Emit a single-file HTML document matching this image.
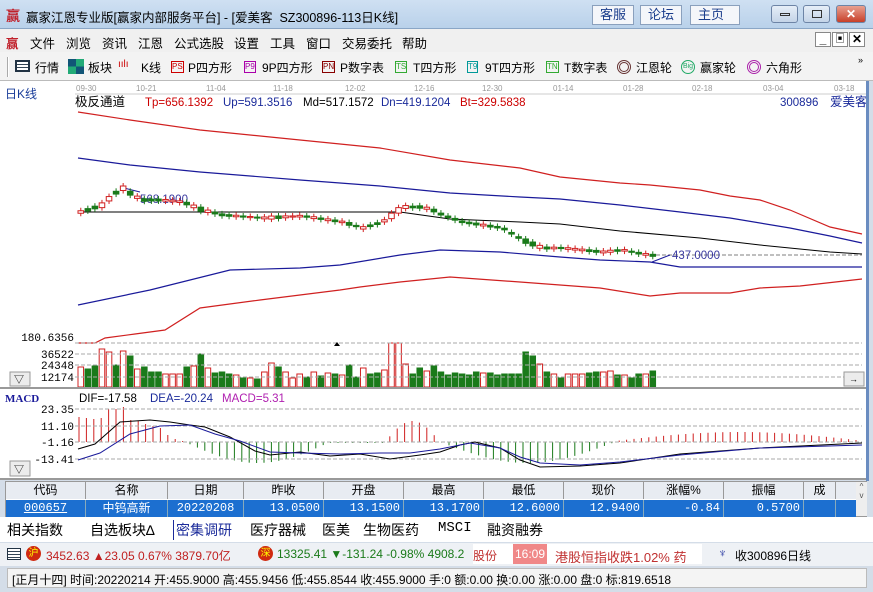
<!DOCTYPE html>
<html><head><meta charset="utf-8"><style>
*{margin:0;padding:0;box-sizing:border-box}
body{width:873px;height:592px;overflow:hidden;background:#d4dde8;font-family:"Liberation Sans","Noto Sans CJK SC",sans-serif;font-size:12px;position:relative}
.abs{position:absolute}
#title{left:0;top:0;width:873px;height:29px;background:linear-gradient(#cfe0f2,#b9d1ea);border-bottom:1px solid #8aa6c6}
#menu{left:0;top:29px;width:873px;height:23px;background:#f0f0f0}
#tool{left:0;top:52px;width:873px;height:29px;background:#f3f3f3;border-bottom:1px solid #bbb}
.mi{position:absolute;top:4px;font-size:12.5px}
.btn{position:absolute;top:5px;height:20px;background:#f4f6fa;border:1px solid #8aa0bd;color:#1a3d8c;font-size:13px;padding:0 7px;line-height:18px}
.wb{position:absolute;top:5px;height:18px;width:27px;border:1px solid #6d84a6;border-radius:3px;background:linear-gradient(#e6eef8,#c4d4e8)}
#chart{left:0;top:81px;width:866px;height:399px;background:#fff}
.tb{position:absolute;top:7px;font-size:12px}
</style></head><body>
<div id="title" class="abs">
<div class="abs" style="left:6px;top:6px;color:#c0202a;font-weight:bold;font-size:14px">赢</div>
<div class="abs" style="left:26px;top:7px;font-size:12.5px">赢家江恩专业版[赢家内部服务平台] - [爱美客&nbsp; SZ300896-113日K线]</div>
<div class="btn" style="left:592px">客服</div><div class="btn" style="left:640px">论坛</div><div class="btn" style="left:690px;width:50px">主页</div>
<div class="wb" style="left:771px"><div class="abs" style="left:8px;top:7px;width:10px;height:3px;border:1px solid #333"></div></div>
<div class="wb" style="left:803px"><div class="abs" style="left:8px;top:4px;width:10px;height:8px;border:1px solid #333"></div></div>
<div class="wb" style="left:836px;width:30px;background:linear-gradient(#e8a090,#c8402a);color:#fff;text-align:center;font-weight:bold;line-height:16px">✕</div>
</div>
<div id="menu" class="abs">
<div class="mi" style="left:6px;color:#c0202a;font-weight:bold">赢</div>
<div class="mi" style="left:30px">文件</div><div class="mi" style="left:66px">浏览</div><div class="mi" style="left:102px">资讯</div><div class="mi" style="left:138px">江恩</div><div class="mi" style="left:174px">公式选股</div><div class="mi" style="left:234px">设置</div><div class="mi" style="left:270px">工具</div><div class="mi" style="left:306px">窗口</div><div class="mi" style="left:342px">交易委托</div><div class="mi" style="left:402px">帮助</div>
<div class="abs" style="left:815px;top:3px;width:16px;height:15px;border:1px solid #888;background:#fff;font-weight:bold;text-align:center;line-height:12px">_</div>
<div class="abs" style="left:832px;top:3px;width:16px;height:15px;border:1px solid #888;background:#fff;font-size:10px;text-align:center;line-height:13px">▣</div>
<div class="abs" style="left:849px;top:3px;width:16px;height:15px;border:1px solid #888;background:#fff;font-weight:bold;text-align:center;line-height:13px">✕</div>
</div>
<div id="tool" class="abs">
<div class="abs" style="left:7px;top:5px;width:2px;height:20px;border-left:1px solid #aaa;border-right:1px solid #fff"></div>
<div class="abs" style="left:15px;top:8px;width:15px;height:12px;border:2px solid #234;background:repeating-linear-gradient(#fff 0 2px,#345 2px 3px)"></div>
<div class="tb" style="left:35px">行情</div>
<div class="abs" style="left:68px;top:7px;width:16px;height:15px;background:conic-gradient(#2a7 0 25%,#157 0 50%,#2a7 0 75%,#157 0)"></div>
<div class="tb" style="left:88px">板块</div>
<div class="tb" style="left:118px;color:#c00;font-size:10px">ıılı</div><div class="tb" style="left:141px">K线</div>
<div class="tb" style="left:171px;color:#c00;font-size:8px;border:1px solid #c00;top:9px;line-height:10px">PS</div><div class="tb" style="left:188px">P四方形</div>
<div class="tb" style="left:244px;color:#a0a;font-size:8px;border:1px solid #a0a;top:9px;line-height:10px">P9</div><div class="tb" style="left:262px">9P四方形</div>
<div class="tb" style="left:322px;color:#800;font-size:8px;border:1px solid #800;top:9px;line-height:10px">PN</div><div class="tb" style="left:340px">P数字表</div>
<div class="tb" style="left:395px;color:#3a3;font-size:8px;border:1px solid #3a3;top:9px;line-height:10px">TS</div><div class="tb" style="left:413px">T四方形</div>
<div class="tb" style="left:467px;color:#099;font-size:8px;border:1px solid #099;top:9px;line-height:10px">T9</div><div class="tb" style="left:485px">9T四方形</div>
<div class="tb" style="left:546px;color:#3a3;font-size:8px;border:1px solid #3a3;top:9px;line-height:10px">TN</div><div class="tb" style="left:564px">T数字表</div>
<div class="abs" style="left:617px;top:8px;width:14px;height:14px;border-radius:50%;border:3px double #633"></div><div class="tb" style="left:636px">江恩轮</div>
<div class="abs" style="left:681px;top:8px;width:14px;height:14px;border-radius:50%;border:1px solid #2a6;font-size:7px;color:#2a6;text-align:center;line-height:12px">Big</div><div class="tb" style="left:700px">赢家轮</div>
<div class="abs" style="left:747px;top:8px;width:14px;height:14px;border-radius:50%;border:3px double #a2a"></div><div class="tb" style="left:766px">六角形</div>
<div class="tb" style="left:858px;top:3px;font-size:9px">»</div>
</div>
<div id="chart" class="abs">
<svg width="866" height="399" style="position:absolute;left:0;top:0" font-family="Liberation Sans,Noto Sans CJK SC,sans-serif">
<g fill="#999" font-size="8"><text x="76" y="10">09-30</text><text x="136" y="10">10-21</text><text x="206" y="10">11-04</text><text x="273" y="10">11-18</text><text x="345" y="10">12-02</text><text x="414" y="10">12-16</text><text x="482" y="10">12-30</text><text x="553" y="10">01-14</text><text x="623" y="10">01-28</text><text x="692" y="10">02-18</text><text x="763" y="10">03-04</text><text x="834" y="10">03-18</text></g>
<line x1="75" y1="13" x2="866" y2="13" stroke="#ccc"/>
<text x="5" y="17" fill="#1a3d9a" font-size="12">日K线</text>
<g font-size="11.5"><text x="75" y="25" fill="#000" font-size="12.5">极反通道</text><text x="145" y="25" fill="#c00">Tp=656.1392</text><text x="223" y="25" fill="#1a2a9a">Up=591.3516</text><text x="303" y="25" fill="#000">Md=517.1572</text><text x="381" y="25" fill="#1a2a9a">Dn=419.1204</text><text x="460" y="25" fill="#c00">Bt=329.5838</text><text x="780" y="25" fill="#1a2a9a">300896</text><text x="830" y="25" fill="#1a2a9a" font-size="12.5">爱美客</text></g>
<g fill="none" stroke-width="1.2" transform="translate(0,-81)">
<polyline stroke="#d02020" points="78,112 130,120 200,130 300,140 380,148 450,160 520,168 560,177 620,183 650,185 700,190 730,196 760,200 790,210 830,227 862,234"/>
<polyline stroke="#1a1a9a" points="78,158 130,165 200,172 300,180 380,186 450,193 520,197 560,199 620,205 680,212 730,218 790,228 830,236 862,243"/>
<polyline stroke="#000" stroke-width="1" points="78,212 400,212 450,219 520,222 560,224 620,231 700,238 760,245 830,252 862,254"/>
<polyline stroke="#1a1a9a" points="78,305 150,290 230,270 300,268 340,265 400,255 440,250 500,252 560,257 600,260 650,262 680,267 730,267 862,267"/>
<polyline stroke="#d02020" points="78,343 95,343 105,338 135,334 165,330 200,308 260,300 300,295 340,290 360,287 400,282 450,277 520,282 560,285 600,288 650,296 680,293 730,293 760,288 800,286 862,279"/>
<polyline stroke="#1a1a9a" stroke-width="1" points="120,187 140,192"/>
<line x1="650" y1="255" x2="862" y2="255" stroke="#999" stroke-dasharray="4,2"/>
<polyline stroke="#1a1a9a" stroke-width="1" points="652,262 670,255"/>
</g>
<g transform="translate(0,-81)"><text x="140" y="203" fill="#3a3aa0" font-size="11.5">568.1900</text><text x="672" y="259" fill="#3a3aa0" font-size="11.5">437.0000</text>
<g id="cdl"></g><g id="vol"></g><g id="mac"></g>
<g stroke="#aaa" stroke-dasharray="4,2"><line x1="75" y1="343" x2="862" y2="343"/><line x1="75" y1="354" x2="862" y2="354"/><line x1="75" y1="365" x2="862" y2="365"/><line x1="75" y1="377" x2="862" y2="377"/>
<line x1="75" y1="409" x2="862" y2="409"/><line x1="75" y1="426" x2="862" y2="426"/><line x1="75" y1="442" x2="862" y2="442"/><line x1="75" y1="459" x2="862" y2="459"/></g>
<line x1="0" y1="388" x2="866" y2="388" stroke="#999" stroke-width="2"/>
<line x1="0" y1="479" x2="866" y2="479" stroke="#999" stroke-width="2"/>
<path d="M334 346 l3 -4 l3 4z" fill="#000"/>
<g font-size="11" fill="#000" text-anchor="end" font-family="Liberation Mono,monospace"><text x="74" y="341">180.6356</text><text x="74" y="358">36522</text><text x="74" y="369">24348</text><text x="74" y="381">12174</text>
<text x="74" y="413">23.35</text><text x="74" y="430">11.10</text><text x="74" y="446">-1.16</text><text x="74" y="463">-13.41</text></g>
<text x="5" y="402" fill="#1a1a9a" font-size="11" font-family="Liberation Serif,serif" font-weight="bold">MACD</text>
<g font-size="11.5"><text x="79" y="402">DIF=-17.58</text><text x="150" y="402" fill="#1a2a9a">DEA=-20.24</text><text x="222" y="402" fill="#b020b0">MACD=5.31</text></g>
<polyline id="dif" fill="none" stroke="#000" points="78,449 95,444 120,422 150,420 170,422 190,425 205,427 230,437 255,451 270,455 300,452 330,456 360,454 390,459 420,455 440,452 460,445 475,442 500,448 520,460 540,467 580,466 620,463 680,454 760,448 862,443"/>
<polyline id="dea" fill="none" stroke="#1a1a9a" points="78,460 100,453 130,434 160,426 190,425 215,434 240,441 270,452 300,453 340,454 380,453 410,453 440,449 470,443 500,448 520,457 540,463 580,465 620,462 680,455 760,448 862,445"/>
<rect x="10" y="372" width="20" height="14" fill="#ececec" stroke="#999"/><text x="14" y="383" font-size="10">▽</text>
<rect x="10" y="461" width="20" height="15" fill="#ececec" stroke="#999"/><text x="14" y="473" font-size="10">▽</text>
<rect x="844" y="372" width="20" height="14" fill="#ececec" stroke="#999"/><text x="849" y="382" font-size="9">→</text>
</g>
</svg>
</div>
<div class="abs" style="left:866px;top:81px;width:3px;height:400px;background:#6a8cc0"></div>
<div class="abs" style="left:5px;top:481px;width:862px;height:36px;background:#fff;border:1px solid #999">
<div id="th" class="abs" style="left:0;top:0;width:850px;height:17px;background:#e8ecf2"></div>
<div id="tr" class="abs" style="left:0;top:18px;width:850px;height:17px;background:#1c6fd0;color:#fff"></div>
<div class="abs" style="left:850px;top:0;width:11px;height:34px;background:#eee;font-size:8px;text-align:center;color:#555">^<br>v</div>
</div>
<div class="abs" style="left:0;top:517px;width:873px;height:25px;background:#fff;font-size:14px">
<span class="abs" style="left:7px;top:3px">相关指数</span><span class="abs" style="left:90px;top:3px">自选板块∆</span><span class="abs" style="left:173px;top:3px;color:#1a2a9a;border-left:1px solid #1a2a9a;padding-left:2px">密集调研</span><span class="abs" style="left:250px;top:3px">医疗器械</span><span class="abs" style="left:322px;top:3px">医美</span><span class="abs" style="left:363px;top:3px">生物医药</span><span class="abs" style="left:438px;top:3px;font-family:'Liberation Mono',monospace">MSCI</span><span class="abs" style="left:487px;top:3px">融资融券</span>
</div>
<div class="abs" style="left:0;top:543px;width:873px;height:23px;background:#eef1f5;font-size:12px">
<div class="abs" style="left:7px;top:5px;width:14px;height:12px;border:1px solid #234;background:repeating-linear-gradient(#fff 0 2px,#345 2px 3px)"></div>
<div class="abs" style="left:26px;top:3px;width:15px;height:15px;border-radius:50%;background:#d02a10;color:#ff0;font-size:10px;text-align:center;line-height:15px">沪</div>
<span class="abs" style="left:46px;top:4px;color:#c02020">3452.63 ▲23.05 0.67% 3879.70亿</span>
<div class="abs" style="left:258px;top:3px;width:15px;height:15px;border-radius:50%;background:#d02a10;color:#ff0;font-size:10px;text-align:center;line-height:15px">深</div>
<span class="abs" style="left:277px;top:4px;color:#1a7a1a">13325.41 ▼-131.24 -0.98% 4908.2</span>
<div class="abs" style="left:473px;top:1px;width:40px;height:20px;background:#fff;color:#c03030;padding:3px 0 0 0">股份</div>
<div class="abs" style="left:513px;top:1px;width:34px;height:20px;background:#f08888;color:#fff;padding:3px 2px">16:09</div>
<div class="abs" style="left:547px;top:1px;width:155px;height:20px;background:#fff;color:#c03030;padding:3px 8px;font-size:13px;overflow:hidden;white-space:nowrap">港股恒指收跌1.02% 药</div>
<span class="abs" style="left:718px;top:3px;color:#1a2a9a">♆</span>
<span class="abs" style="left:735px;top:4px">收300896日线</span>
</div>
<div class="abs" style="left:7px;top:568px;width:860px;height:20px;background:#f4f4f4;border:1px solid #bbb;font-size:12px;padding:2px 4px">[正月十四] 时间:20220214 开:455.9000 高:455.9456 低:455.8544 收:455.9000 手:0 额:0.00 换:0.00 涨:0.00 盘:0 标:819.6518</div>
<script>
var NS="http://www.w3.org/2000/svg";
function el(p,t,a){var e=document.createElementNS(NS,t);for(var k in a)e.setAttribute(k,a[k]);p.appendChild(e);return e;}
var V="r367 g369 g366 r349 r352 g365 r351 g356 r369 g367 g372 g372 r374 r374 r374 g367 r366 g354 r368 g373 g372 g374 r375 g378 r378 g379 r372 r363 g367 r372 r378 r374 g377 r372 g376 r373 g374 r375 g365 g377 r368 g374 g373 r370 r343 r343 r364 g374 g368 r371 g366 g372 g375 g373 g374 g375 g372 r373 g373 g375 g374 g374 g374 g352 g356 r364 g372 r374 g378 r374 r374 r374 g373 g372 r372 r371 g375 r375 g378 g374 r374 g371".split(" ");
var vol=document.getElementById("vol"),cdl=document.getElementById("cdl"),mac=document.getElementById("mac");
var CP=[[78,212],[100,205],[110,195],[120,188],[130,195],[140,200],[160,200],[180,202],[200,210],[220,215],[260,218],[300,216],[340,222],[360,228],[370,225],[380,222],[390,215],[400,207],[420,207],[430,210],[440,215],[460,222],[500,228],[520,240],[540,248],[560,248],[600,252],[620,250],[640,254],[655,256]];
function cy(x){for(var i=1;i<CP.length;i++)if(x<=CP[i][0]){var a=CP[i-1],b=CP[i];return a[1]+(b[1]-a[1])*(x-a[0])/(b[0]-a[0]);}return 256;}
var st=(650-78)/(V.length-1),bw=Math.max(3,st-1.5);
for(var i=0;i<V.length;i++){var x=78+i*st,c=V[i][0],t=+V[i].slice(1);
 var r=c=="r";
 el(vol,"rect",{x:x,y:t,width:bw,height:387-t,fill:r?"#fff":"#1a7a1a",stroke:r?"#d02020":"#1a7a1a"});
 var y=cy(x),h=Math.max(1,(387-t)/8);
 el(cdl,"line",{x1:x+bw/2,y1:y-h/2-3,x2:x+bw/2,y2:y+h/2+3,stroke:r?"#d02020":"#1a7a1a"});
 el(cdl,"rect",{x:x,y:y-h/2,width:bw,height:h,fill:r?"#fff":"#1a7a1a",stroke:r?"#d02020":"#1a7a1a"});
}
var M=[417,418,419,418,409,409,407,420,421,424,426,428,435,439,441];
for(var i=0;i<106;i++){var x=79+i*7.4,v;
 if(i<M.length)v=M[i];
 else if(x<330)v=442+21*Math.sin(Math.PI*(x-185)/145);
 else if(x<385)v=443;
 else if(x<440)v=442-21*Math.sin(Math.PI*(x-385)/55);
 else if(x<615)v=442+21*Math.sin(Math.PI*(x-440)/175);
 else v=442-9*Math.sin(Math.PI*(x-615)/250)-1;
 el(mac,"line",{x1:x,y1:442,x2:x,y2:v,stroke:v<442?"#d02020":"#1a7a1a"});}
var H=["代码","名称","日期","昨收","开盘","最高","最低","现价","涨幅%","振幅","成"],W=[80,82,76,80,80,80,80,80,80,80,32];
var R=["000657","中钨高新","20220208","13.0500","13.1500","13.1700","12.6000","12.9400","-0.84","0.5700",""];
var th=document.getElementById("th"),tr=document.getElementById("tr"),xx=0;
for(var i=0;i<H.length;i++){
 var d=document.createElement("div");d.style.cssText="position:absolute;top:0;height:17px;line-height:16px;text-align:center;border-right:1px solid #999;left:"+xx+"px;width:"+W[i]+"px";d.textContent=H[i];th.appendChild(d);
 var e=document.createElement("div");e.style.cssText="position:absolute;top:0;height:17px;line-height:16px;border-right:1px solid #8ab;font-family:'Liberation Mono',monospace;padding:0 3px;left:"+xx+"px;width:"+W[i]+"px;text-align:"+(i<3?"center":"right")+(i==0?";text-decoration:underline":"")+(i==1?";font-family:'Noto Sans CJK SC',sans-serif":"");e.textContent=R[i];tr.appendChild(e);
 xx+=W[i];}
</script>
</body></html>
